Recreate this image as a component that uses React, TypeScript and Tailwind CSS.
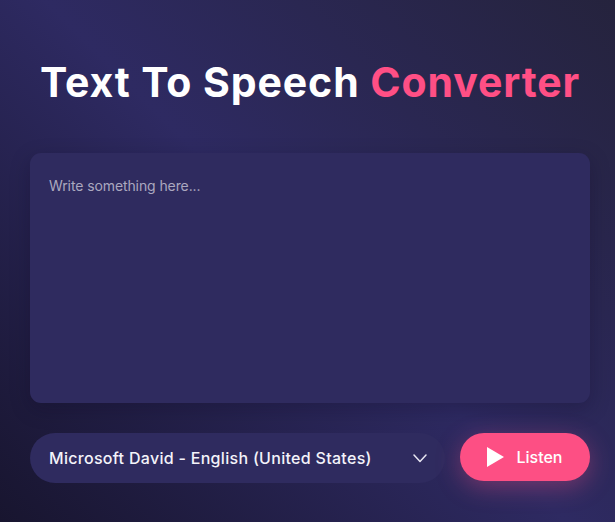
import React from "react";

export default function App() {
  return (
    <div
      className="w-full h-[522px] overflow-hidden bg-[linear-gradient(45deg,#18152f_0%,#2e2a62_50%,#25233d_100%)]"
      style={{ fontFamily: "Inter, 'Noto Sans', sans-serif" }}
    >
      <div className="ml-[30px] w-[560px] flex flex-col items-center">
        <h1 className="mt-[52px] h-[60px] leading-[60px] text-[41px] font-bold tracking-[0.9px] text-white whitespace-nowrap">
          Text To Speech <span className="text-[#ff4f85]">Converter</span>
        </h1>
        <div className="mt-[41px] w-[560px] h-[250px] rounded-[11px] bg-[#2f2b5f] shadow-[0_6px_20px_rgba(10,8,30,0.25)] px-[19px] pt-[23px]">
          <div className="text-[14px] leading-[20px] tracking-[-0.1px] text-[#aba8bf]">Write something here...</div>
        </div>
        <div className="mt-[30px] w-[560px] flex items-start gap-[15px]">
          <div className="w-[415px] h-[50px] rounded-full bg-[#2f2b5f] flex items-center pl-[19px] pr-[18px] justify-between">
            <span className="text-[16px] font-medium tracking-[0.3px] text-[#f4f3fa]">Microsoft David - English (United States)</span>
            <svg width="14" height="14" viewBox="0 0 14 14" fill="none">
              <path d="M1 4l6 6.5L13 4" stroke="#e8e6f2" strokeWidth="1.5" strokeLinecap="round" strokeLinejoin="round" />
            </svg>
          </div>
          <button className="w-[130px] h-[48px] rounded-full bg-[#fd4f84] flex items-center justify-center gap-[12px] text-white text-[16px] font-medium shadow-[0_6px_24px_rgba(253,79,132,0.35)]">
            <svg width="17" height="20" viewBox="0 0 17 20">
              <path d="M0 0L17 10L0 20Z" fill="#ffffff" />
            </svg>
            <span>Listen</span>
          </button>
        </div>
      </div>
    </div>
  );
}
